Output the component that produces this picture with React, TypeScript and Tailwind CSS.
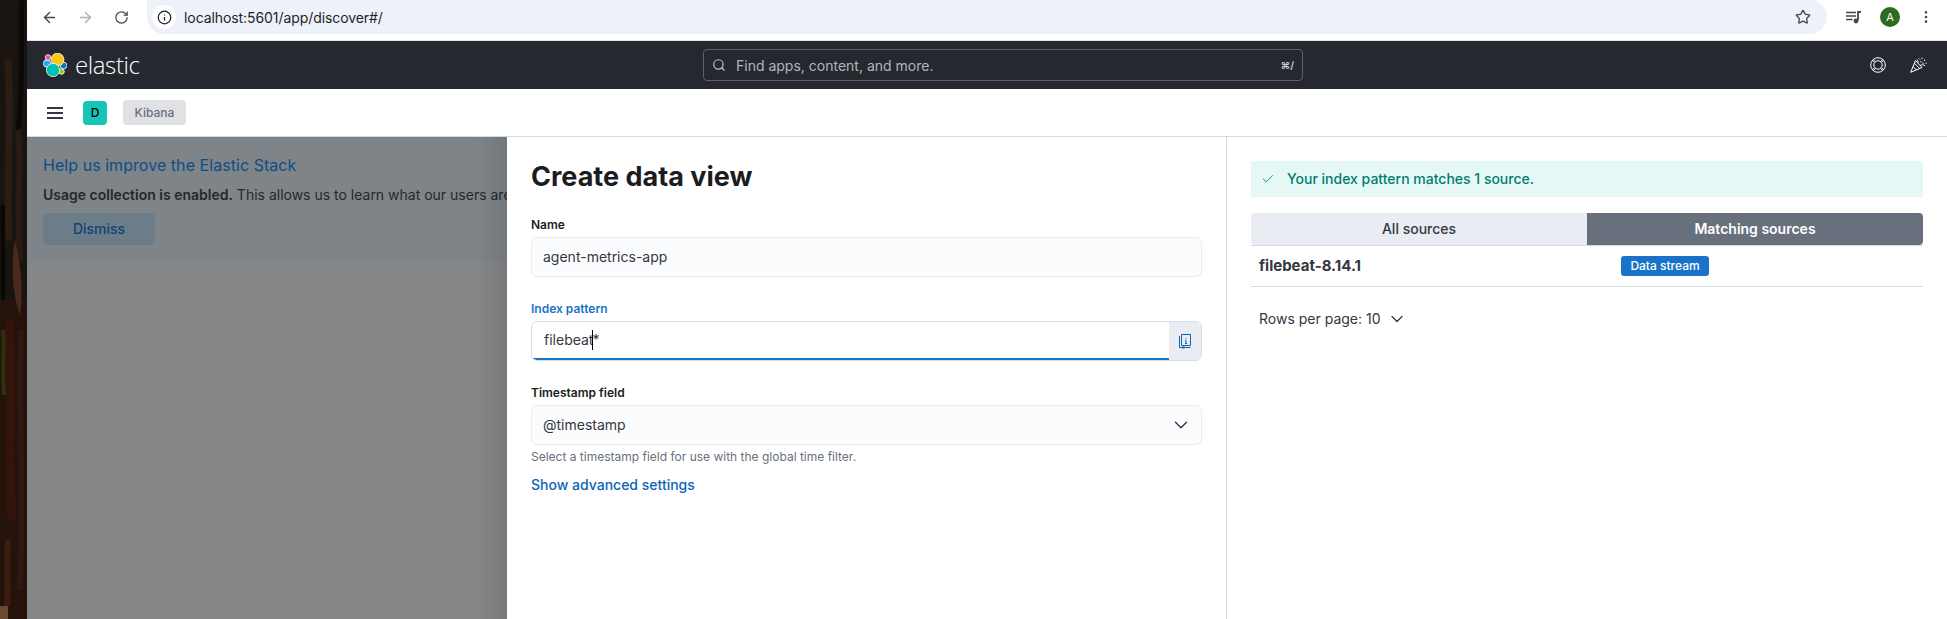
import { ArrowLeft, ArrowRight, RotateCw, Info, Star, EllipsisVertical, Search, ChevronDown, Check } from "lucide-react";

const FONT = "font-['Inter',sans-serif]";

function ElasticLogo() {
  return (
    <svg width="24" height="24" viewBox="0 0 24 24" className="shrink-0" stroke="#fff" strokeWidth="0.8">
      <circle cx="4" cy="10.5" r="3.7" fill="#1BA9F5" />
      <circle cx="5" cy="4.5" r="2.8" fill="#F04E98" />
      <circle cx="20.5" cy="12.5" r="3.4" fill="#0077CC" />
      <circle cx="18.5" cy="18.5" r="2.8" fill="#93C90E" />
      <circle cx="14.5" cy="6.6" r="6.4" fill="#FEC514" />
      <circle cx="10" cy="17" r="6.6" fill="#00BFB3" />
    </svg>
  );
}

function BookIcon() {
  return (
    <svg width="16" height="16" viewBox="0 0 16 16" fill="none" stroke="#0b64b4" strokeWidth="1">
      <path d="M4.5 1.5h9v11h-9zM2.5 3v11.5h11" />
      <path d="M9 5v.8M8 7.5h1v3M8 10.5h2" />
      <path d="M5 13.5h2.5v2H5z" fill="#0b64b4" stroke="none" />
    </svg>
  );
}

function MediaIcon() {
  return (
    <svg width="16" height="13" viewBox="0 0 16 13" fill="none" stroke="#474747" strokeWidth="1.4">
      <path d="M0 1.5h10M0 5h10M0 8.5h6.5" />
      <path d="M12 9.5V1h3" strokeWidth="1.8" />
      <circle cx="10" cy="10" r="2.4" fill="#474747" stroke="none" />
    </svg>
  );
}

function LifeRingIcon() {
  return (
    <svg width="16" height="16" viewBox="0 0 16 16" fill="none" stroke="#fff" strokeWidth="1">
      <circle cx="8" cy="8" r="7.3" />
      <circle cx="8" cy="8" r="4.2" />
      <path d="M3.2 2.4l2 2M2.4 3.2l2 2M12.8 2.4l-2 2M13.6 3.2l-2 2M3.2 13.6l2-2M2.4 12.8l2-2M12.8 13.6l-2-2M13.6 12.8l-2-2" />
    </svg>
  );
}

function PartyIcon() {
  return (
    <svg width="17" height="16" viewBox="0 0 17 16" fill="none" stroke="#fff" strokeWidth="1">
      <path d="M.7 15.3L5.5 3.5 12 10.5Z" strokeLinejoin="round" />
      <path d="M3 9.5l3.6 3.6M4.4 6.2l5 5" />
      <path d="M7 2.5C8 3.5 8.2 5 7.8 6M10 8.5c1.5-1 3.5-1 5 .3M9 1.5l1 1" />
      <path d="M12 1v.5M14.5 3v.5M11 4.5v.5M16 6v.5M13 6v.5" strokeLinecap="round" />
    </svg>
  );
}

// strip of the desktop wallpaper (tree bark) left of the browser window
function Bark() {
  return (
    <svg width="27" height="619" viewBox="0 0 27 619" className="block">
      <rect width="27" height="619" fill="#1a1410" />
      <rect y="300" width="27" height="319" fill="#24120b" />
      <path d="M8 60C12 120 6 180 9 240" stroke="#2b1d14" strokeWidth="7" fill="none" />
      <path d="M22 0C20 40 24 90 18 130" stroke="#0c0a08" strokeWidth="5" fill="none" />
      <path d="M18 130C22 170 16 200 20 260" stroke="#2a1a14" strokeWidth="6" fill="none" />
      <path d="M3 205C2 240 4 270 3 300" stroke="#0b0705" strokeWidth="4" fill="none" />
      <path d="M15 240C10 270 14 300 20 315C24 290 20 260 15 240Z" fill="#4a2a1a" />
      <path d="M9 320C14 380 7 450 12 520" stroke="#32140b" strokeWidth="9" fill="none" />
      <path d="M21 330C18 400 24 480 20 590" stroke="#2f1810" strokeWidth="6" fill="none" />
      <path d="M3 330C5 350 2 365 4 395" stroke="#2e3010" strokeWidth="4" fill="none" />
      <path d="M8 540C6 570 9 590 7 606" stroke="#3a1c10" strokeWidth="6" fill="none" />
      <rect y="606" width="8" height="13" fill="#6a4a30" />
    </svg>
  );
}

function Label({ children, active }: { children: string; active?: boolean }) {
  return (
    <div className={`text-xs font-semibold leading-4 mb-1 ${active ? "text-[#1a73c8]" : "text-[#1a1c21]"}`}>
      {children}
    </div>
  );
}

export default function App() {
  return (
    <div className={`${FONT} flex h-[619px] w-[1947px] overflow-hidden bg-white`}>
      <div className="w-[27px] shrink-0">
        <Bark />
      </div>

      <div className="flex min-w-0 flex-1 flex-col">
        {/* browser toolbar */}
        <div className="flex h-[41px] shrink-0 items-start border-b border-[#e3e3e3] bg-white">
          <div className="flex h-[34px] w-[120px] items-center text-[#474747]">
            <ArrowLeft size={17} className="ml-[14px]" />
            <ArrowRight size={17} className="ml-[19px] text-[#b0b0b0]" />
            <RotateCw size={15} className="ml-[20px]" />
          </div>
          <div className="flex h-[34px] w-[1680px] items-center rounded-r-[17px] rounded-bl-[17px] bg-[#ecf1fa] pl-[5px] pr-4">
            <div className="flex h-6 w-6 items-center justify-center rounded-full bg-white text-[#1f1f1f]">
              <Info size={15} />
            </div>
            <span className="ml-2 flex-1 text-[14px] tracking-[-0.08px] text-[#1f1f1f]">localhost:5601/app/discover#/</span>
            <Star size={16} className="text-[#474747]" />
          </div>
          <div className="flex h-[34px] flex-1 items-center text-[#474747]">
            <div className="ml-[19px]">
              <MediaIcon />
            </div>
            <div className="ml-[18px] flex h-5 w-5 items-center justify-center rounded-full bg-[#2f6b1e] text-[11px] text-white">A</div>
            <EllipsisVertical size={16} className="ml-[18px]" />
          </div>
        </div>

        {/* kibana header */}
        <div className="flex h-12 shrink-0 items-center bg-[#25282f]">
          <div className="flex w-[676px] shrink-0 items-center pl-4">
            <ElasticLogo />
            <span className="ml-2 font-['Open_Sans',sans-serif] text-[24px] font-light leading-none tracking-[-0.4px] text-white">elastic</span>
          </div>
          <div className="flex h-8 w-[600px] shrink-0 items-center rounded-[4px] border border-[#5f6166] px-2 text-[#b4b5b8]">
            <Search size={14} className="text-[#c4c5c8]" />
            <span className="ml-[10px] flex-1 text-[14px]">Find apps, content, and more.</span>
            <span className="text-[10px] font-semibold text-[#d0d0d0]">⌘/</span>
          </div>
          <div className="flex flex-1 items-center justify-end gap-[24px] pr-[20px]">
            <LifeRingIcon />
            <PartyIcon />
          </div>
        </div>

        {/* breadcrumbs */}
        <div className="flex h-12 shrink-0 items-center border-b border-[#d3dae6] bg-white">
          <div className="ml-5 flex w-4 flex-col gap-[3px]">
            <div className="h-[2px] bg-[#343741]" />
            <div className="h-[2px] bg-[#343741]" />
            <div className="h-[2px] bg-[#343741]" />
          </div>
          <div className="ml-5 flex h-6 w-6 items-center justify-center rounded-[4px] bg-[#16c5b8] text-xs font-medium text-black">D</div>
          <div className="ml-4 flex h-[25px] w-[63px] items-center justify-center rounded-[4px] bg-[#e0e1e4] text-xs font-medium text-[#69707d]">Kibana</div>
        </div>

        <div className="flex min-h-0 flex-1">
          {/* dimmed page behind the flyout */}
          <div className="relative w-[480px] shrink-0 overflow-hidden bg-[#858687]">
            <div className="h-[124px] w-[900px] bg-[#7e8488] px-4 pt-4">
              <div className="text-base font-normal leading-6 tracking-[0.05px] text-[#0e4e86]">Help us improve the Elastic Stack</div>
              <div className="mt-[6px] text-sm leading-6 text-[#26282c]">
                <b className="font-semibold">Usage collection is enabled.</b> This allows us to learn what our users are interested in
              </div>
              <div className="mt-[6px] flex h-8 w-28 items-center justify-center rounded-[4px] bg-[#6c7d8a] text-sm font-medium text-[#0e4275]">Dismiss</div>
            </div>
            <div className="absolute inset-y-0 right-0 w-8 bg-gradient-to-r from-transparent to-black/10" />
          </div>

          {/* flyout form */}
          <div className="w-[720px] shrink-0 border-r border-[#d3dae6] bg-white px-6">
            <h1 className="mt-5 text-[27px] font-bold leading-10 text-[#1a1c21]">Create data view</h1>
            <div className="mt-5">
              <Label>Name</Label>
              <div className="flex h-10 items-center rounded-[6px] border border-[#e9ecf3] bg-[#fbfcfd] px-[11px] text-sm text-[#343741]">agent-metrics-app</div>
            </div>
            <div className="mt-6">
              <Label active>Index pattern</Label>
              <div className="flex h-10 overflow-hidden rounded-[6px] border border-[#d9dde8] bg-white">
                <div className="flex flex-1 items-center border-b-2 border-[#1a73c8] px-3 text-sm text-[#343741]">
                  filebeat<span className="-ml-px -mr-px h-5 w-px bg-black" />*
                </div>
                <div className="flex w-8 items-center justify-center bg-[#e9edf3]">
                  <BookIcon />
                </div>
              </div>
            </div>
            <div className="mt-6">
              <Label>Timestamp field</Label>
              <div className="flex h-10 items-center justify-between rounded-[6px] border border-[#e9ecf3] bg-[#fbfcfd] px-[11px] text-sm text-[#343741]">
                @timestamp
                <ChevronDown size={22} strokeWidth={1.5} className="-mr-[2px]" />
              </div>
              <div className="mt-1 text-xs leading-4 text-[#69707d]">Select a timestamp field for use with the global time filter.</div>
            </div>
            <div className="mt-[10px] text-sm font-medium leading-5 text-[#0b64b4]">Show advanced settings</div>
          </div>

          {/* sources */}
          <div className="min-w-0 flex-1 bg-white pl-6 pr-6 pt-6">
            <div className="flex h-9 items-center bg-[#e6f8f5] pl-[10px] text-sm font-medium text-[#017d73]">
              <Check size={14} strokeWidth={1.5} />
              <span className="ml-[12px]">Your index pattern matches 1 source.</span>
            </div>
            <div className="mt-4 flex h-8 overflow-hidden rounded-[4px] text-sm">
              <div className="flex w-[336px] items-center justify-center bg-[#e9edf3] font-medium text-[#343741]">All sources</div>
              <div className="flex flex-1 items-center justify-center bg-[#69707d] font-semibold text-white">Matching sources</div>
            </div>
            <div className="flex h-[42px] items-center border-y border-[#d3dae6]">
              <div className="w-[370px] pl-2 text-[15px] font-bold text-[#343741]">filebeat-8.14.1</div>
              <div className="flex h-5 w-[88px] items-center justify-center rounded-[3px] bg-[#1a73c8] text-xs font-medium text-white">Data stream</div>
            </div>
            <div className="mt-[22px] flex items-center pl-2 text-sm leading-5 text-[#343741]">
              Rows per page: 10
              <ChevronDown size={20} strokeWidth={1.5} className="ml-[6px]" />
            </div>
          </div>
        </div>
      </div>
    </div>
  );
}
